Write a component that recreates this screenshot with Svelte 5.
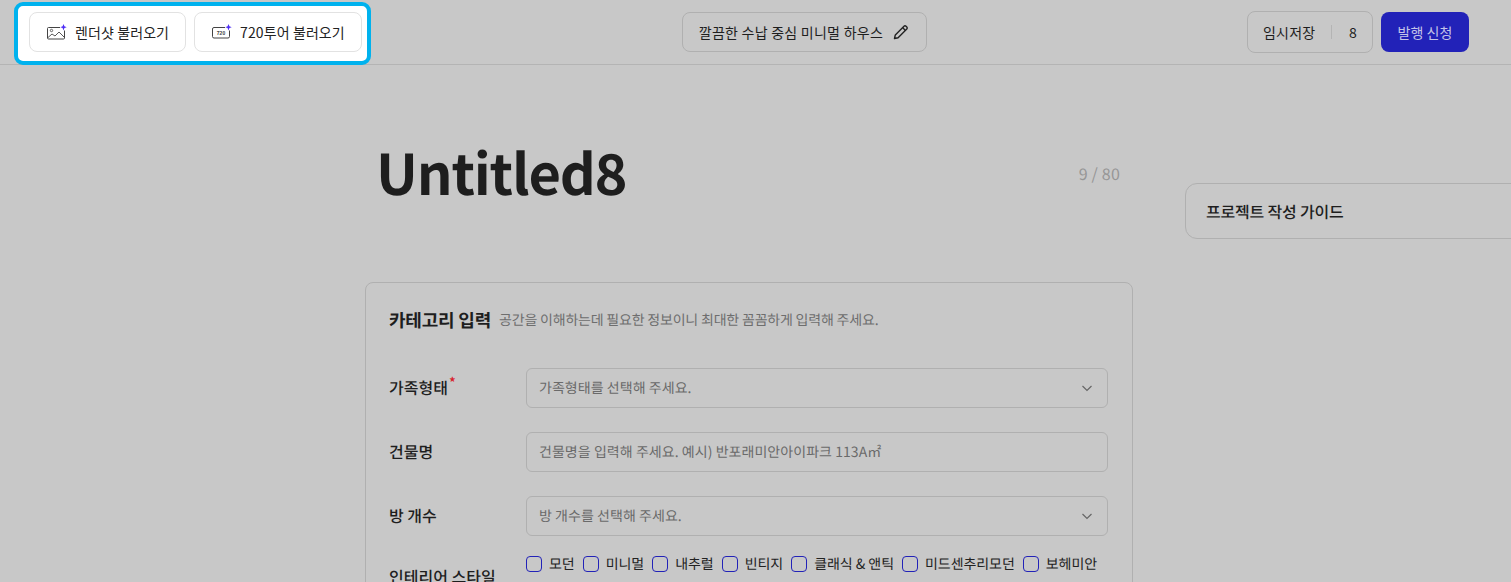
<script>
  const fields = [
    { label: '가족형태', required: true, placeholder: '가족형태를 선택해 주세요.', select: true },
    { label: '건물명', required: false, placeholder: '건물명을 입력해 주세요. 예시) 반포래미안아이파크 113A㎡', select: false },
    { label: '방 개수', required: false, placeholder: '방 개수를 선택해 주세요.', select: true },
  ];
  const styles = ['모던', '미니멀', '내추럴', '빈티지', '클래식 & 앤틱', '미드센추리모던', '보헤미안'];
</script>

<div class="page">
  <header class="topbar">
    <div class="loaders">
      <button class="loader">
        <svg width="20" height="16" viewBox="0 0 20 16" fill="none">
          <rect x="0.5" y="3.5" width="17" height="11.5" rx="1" stroke="#444" />
          <circle cx="4.5" cy="6.5" r="1.2" stroke="#444" stroke-width="0.8" />
          <path d="M1 13.5l4-3.5 3 2 4-4 5 5" stroke="#444" stroke-width="0.9" />
          <rect x="13" y="0" width="7" height="6.5" fill="#fff" />
          <path d="M16.5 0l.9 2.3 2.3.9-2.3.9-.9 2.3-.9-2.3-2.3-.9 2.3-.9z" fill="#4f2ff5" />
        </svg>
        렌더샷 불러오기
      </button>
      <button class="loader">
        <svg width="20" height="16" viewBox="0 0 20 16" fill="none">
          <rect x="0.5" y="3.5" width="17" height="10.5" rx="1.5" stroke="#444" />
          <text x="9" y="10.8" text-anchor="middle" class="tiny">720</text>
          <rect x="13" y="0" width="7" height="6.5" fill="#fff" />
          <path d="M16.5 0l.9 2.3 2.3.9-2.3.9-.9 2.3-.9-2.3-2.3-.9 2.3-.9z" fill="#4f2ff5" />
        </svg>
        720투어 불러오기
      </button>
    </div>

    <button class="project-name">
      깔끔한 수납 중심 미니멀 하우스
      <svg width="16" height="16" viewBox="0 0 16 16" fill="none" stroke="#222" stroke-width="1.4" stroke-linejoin="round">
        <path d="M1.5 14.5l.8-3.6L11 2.2a1.4 1.4 0 0 1 2 0l.8.8a1.4 1.4 0 0 1 0 2l-8.7 8.7z" />
        <path d="M9.6 3.6l2.8 2.8" />
      </svg>
    </button>

    <div class="actions">
      <button class="save">
        <span>임시저장</span>
        <i></i>
        <span>8</span>
      </button>
      <button class="publish">발행 신청</button>
    </div>
  </header>

  <main class="content">
    <section class="editor">
      <div class="title-row">
        <h1>Untitled8</h1>
        <span class="count">9 / 80</span>
      </div>

      <div class="panel">
        <div class="panel-head">
          <h2>카테고리 입력</h2>
          <p>공간을 이해하는데 필요한 정보이니 최대한 꼼꼼하게 입력해 주세요.</p>
        </div>

        {#each fields as field}
          <div class="row">
            <div class="label">
              {field.label}{#if field.required}<sup>*</sup>{/if}
            </div>
            <div class="input">
              <span>{field.placeholder}</span>
              {#if field.select}
                <svg width="12" height="12" viewBox="0 0 12 12" fill="none" stroke="#666" stroke-width="1.2">
                  <path d="M1.5 4l4.5 4.5L10.5 4" />
                </svg>
              {/if}
            </div>
          </div>
        {/each}

        <div class="row style-row">
          <div class="label">인테리어 스타일</div>
          <div class="checks">
            {#each styles as style}
              <span class="check"><b></b>{style}</span>
            {/each}
          </div>
        </div>
      </div>
    </section>

    <aside class="guide">프로젝트 작성 가이드</aside>
  </main>
</div>

<style>
  :global(body) {
    margin: 0;
    background: #c8c8c8;
    overflow: hidden;
  }

  .page {
    height: 582px;
    overflow: hidden;
    font-family: "Noto Sans CJK KR", "Noto Sans", sans-serif;
    color: #1e1e1e;
    text-rendering: geometricPrecision;
  }

  button {
    font: inherit;
    color: inherit;
    cursor: pointer;
  }

  .topbar {
    height: 65px;
    box-sizing: border-box;
    padding: 0 42px 0 29px;
    display: flex;
    align-items: center;
    justify-content: space-between;
    border-bottom: 1px solid #b4b4b4;
  }

  .loaders {
    position: relative;
    display: flex;
    gap: 8px;
    margin-top: -1px;
  }

  /* spotlight around the highlighted buttons */
  .loaders::before {
    content: "";
    position: absolute;
    inset: -10px -9px -13px -15px;
    background: #fff;
    border: 4px solid #00b2ee;
    border-radius: 9px;
  }

  .loader {
    position: relative;
    height: 40px;
    box-sizing: border-box;
    padding: 0 16px 0 17px;
    display: flex;
    align-items: center;
    gap: 8px;
    background: #fff;
    border: 1px solid #e2e2e2;
    border-radius: 8px;
    font-size: 14px;
    letter-spacing: 0.1px;
    color: #222;
  }

  .tiny {
    font-family: "Liberation Sans", sans-serif;
    font-size: 5px;
    font-weight: 700;
    fill: #444;
  }

  .project-name {
    height: 40px;
    box-sizing: border-box;
    padding: 0 17px 0 16px;
    display: flex;
    align-items: center;
    gap: 10px;
    background: transparent;
    border: 1px solid #b0b0b0;
    border-radius: 8px;
    font-size: 14px;
    letter-spacing: 0.25px;
    margin-top: -1px;
  }

  .actions {
    display: flex;
    align-items: center;
    gap: 8px;
    margin-top: -1px;
  }

  .save {
    height: 42px;
    width: 126px;
    box-sizing: border-box;
    padding: 0 15px;
    display: flex;
    align-items: center;
    justify-content: space-between;
    background: transparent;
    border: 1px solid #b0b0b0;
    border-radius: 8px;
    font-size: 14px;
    letter-spacing: 0.2px;
  }

  .save i {
    width: 1px;
    height: 14px;
    background: #b4b4b4;
    margin-left: -1px;
  }

  .publish {
    height: 40px;
    width: 88px;
    padding: 0;
    background: #2222b8;
    border: 0;
    border-radius: 8px;
    font-size: 14px;
    letter-spacing: 0.1px;
    color: #c4c4e8;
  }

  .content {
    display: flex;
    align-items: flex-start;
    padding-left: 365px;
  }

  .editor {
    width: 768px;
    flex-shrink: 0;
  }

  .title-row {
    height: 217px;
    box-sizing: border-box;
    padding: 67px 13px 0 11px;
    display: flex;
    align-items: flex-start;
    justify-content: space-between;
  }

  h1 {
    margin: 0;
    font-size: 56px;
    line-height: 80px;
    font-weight: 700;
    letter-spacing: -1.2px;
  }

  .count {
    margin-top: 29px;
    font-size: 16px;
    line-height: 24px;
    letter-spacing: 0.2px;
    color: #969696;
  }

  .panel {
    height: 340px;
    box-sizing: border-box;
    padding: 23px 24px 0 23px;
    border: 1px solid #b0b0b0;
    border-radius: 8px;
  }

  .panel-head {
    display: flex;
    align-items: center;
    gap: 8px;
    height: 28px;
    margin-bottom: 34px;
  }

  h2 {
    margin: 0;
    font-size: 18px;
    font-weight: 700;
    letter-spacing: -0.2px;
  }

  .panel-head p {
    margin: 0;
    font-size: 14px;
    letter-spacing: -0.2px;
    color: #6e6e6e;
  }

  .row {
    display: flex;
    align-items: center;
    margin-bottom: 24px;
  }

  .label {
    width: 137px;
    flex-shrink: 0;
    font-size: 16px;
    font-weight: 500;
    line-height: 24px;
    margin-top: -2px;
  }

  sup {
    font-size: 14px;
    line-height: 0;
    color: #d8202c;
    margin-left: 1px;
  }

  .input {
    flex: 1;
    height: 40px;
    box-sizing: border-box;
    padding: 0 14px 0 12px;
    display: flex;
    align-items: center;
    justify-content: space-between;
    border: 1px solid #b0b0b0;
    border-radius: 6px;
    font-size: 14px;
    letter-spacing: 0.05px;
    color: #6a6a6a;
  }

  .style-row {
    align-items: flex-start;
  }

  .style-row .label {
    margin-top: 4px;
  }

  .checks {
    display: flex;
    flex-wrap: wrap;
    gap: 8px;
    margin-top: -8px;
  }

  .check {
    display: flex;
    align-items: center;
    gap: 7px;
    height: 24px;
    font-size: 14px;
    letter-spacing: -0.05px;
    color: #222;
  }

  .check b {
    width: 16px;
    height: 16px;
    box-sizing: border-box;
    border: 1px solid #2222b8;
    border-radius: 4px;
  }

  .guide {
    width: 400px;
    height: 56px;
    flex-shrink: 0;
    box-sizing: border-box;
    margin: 118px 0 0 52px;
    padding: 0 20px;
    display: flex;
    align-items: center;
    border: 1px solid #b0b0b0;
    border-radius: 12px;
    font-size: 16px;
    font-weight: 500;
    letter-spacing: -0.2px;
  }
</style>
